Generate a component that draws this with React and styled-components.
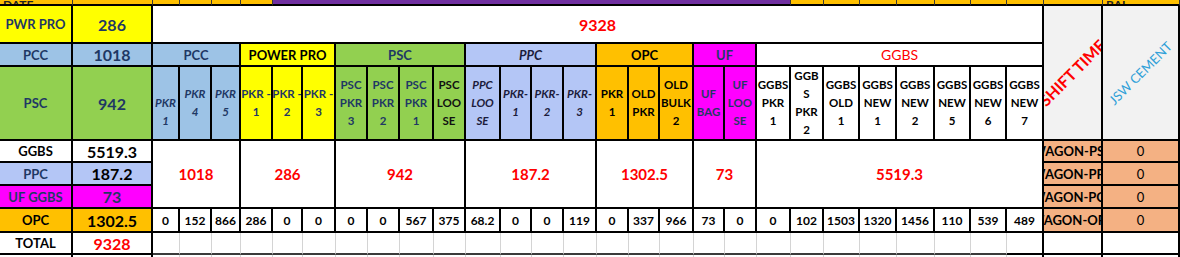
import React from "react";
import styled, { createGlobalStyle } from "styled-components";

const NAVY = "#1f3864";
const RED = "#ff0000";

const GlobalStyle = createGlobalStyle`
    html, body {
        margin: 0;
        padding: 0;
        background: #fff;
        overflow: hidden;
    }
    body {
        font-family: Lato, "Liberation Sans", sans-serif;
    }
`

const Sheet = styled.div`
    display: grid;
    width: 1180px;
    grid-template-columns: 73px 80px 27px 32px 29px 32px 30px 33px 32px 32px 34px 32px 35px 31px 32px 33px 32px 31px 34px 31px 32px 34px 33px 36px 37px 38px 36px 36px 37px 59px 77px;
    grid-template-rows: 6px 38px 23px 74px 22px 23px 23px 24px 22px 10px;
`

const Cell = styled.div`
    grid-column: span ${(p) => p.$span || 1};
    grid-row: span ${(p) => p.$rows || 1};
    box-sizing: border-box;
    background: ${(p) => p.$bg || "#fff"};
    color: ${(p) => p.$color || "#000"};
    font-size: ${(p) => p.$size || 13}px;
    font-weight: ${(p) => p.$weight || 700};
    font-style: ${(p) => (p.$italic ? "italic" : "normal")};
    border-right: 2px solid #000;
    border-bottom: 2px solid #000;
    display: flex;
    align-items: center;
    justify-content: center;
    text-align: center;
    overflow: hidden;
    white-space: nowrap;
`

const StripCell = styled.div`
    grid-column: span ${(p) => p.$span || 1};
    box-sizing: border-box;
    background: ${(p) => p.$bg || "#ffc000"};
    border-right: 1px solid #3a3a3a;
    border-bottom: 2px solid #000;
    display: flex;
    align-items: flex-end;
    justify-content: ${(p) => p.$align || "flex-start"};
    overflow: hidden;
    font-size: 12px;
    font-weight: 700;
    line-height: 12px;
    color: #222;
    padding-left: 3px;

    & > span {
        margin-bottom: -7px;
    }
`

const SubHeader = styled(Cell)`
    white-space: pre;
    font-size: 11.5px;
    line-height: 18px;
`

const BlankCell = styled.div`
    box-sizing: border-box;
    background: #fff;
    border-right: ${(p) => (p.$strong ? "2px solid #000" : "1px solid #d4d4d4")};
    border-bottom: 2px solid ${(p) => (p.$strong ? "#000" : "#3a3a3a")};
`

const RotatedText = styled.span`
    display: block;
    transform: rotate(-45deg);
    white-space: nowrap;
    color: ${(p) => p.$color};
    font-size: ${(p) => p.$size}px;
    font-weight: ${(p) => p.$weight};
`

const groups = [
    {
        name: "PCC", bg: "#9dc3e6", color: NAVY, total: "1018",
        subs: ["\nPKR\n1", "PKR\n4", "PKR\n5"], subColor: NAVY, subItalic: true,
        values: ["0", "152", "866"],
    },
    {
        name: "POWER PRO", bg: "#ffff00", color: "#000", total: "286",
        subs: ["PKR -\n1", "PKR -\n2", "PKR -\n3"], subColor: NAVY,
        values: ["286", "0", "0"],
    },
    {
        name: "PSC", bg: "#92d050", color: NAVY, total: "942",
        subs: ["PSC\nPKR\n3", "PSC\nPKR\n2", "PSC\nPKR\n1", "PSC\nLOO\nSE"], subColor: NAVY,
        values: ["0", "0", "567", "375"],
    },
    {
        name: "PPC", bg: "#b4c6f6", color: "#1c1c3c", italic: true, total: "187.2",
        subs: ["PPC\nLOO\nSE", "PKR-\n1", "PKR-\n2", "PKR-\n3"], subColor: "#1c1c3c", subItalic: true,
        values: ["68.2", "0", "0", "119"],
    },
    {
        name: "OPC", bg: "#ffc000", color: "#000", total: "1302.5",
        subs: ["PKR\n1", "OLD\nPKR", "OLD\nBULK\n2"], subColor: "#000",
        values: ["0", "337", "966"],
    },
    {
        name: "UF", bg: "#ff00ff", color: NAVY, total: "73",
        subs: ["UF\nBAG", "UF\nLOO\nSE"], subColor: NAVY,
        values: ["73", "0"],
    },
    {
        name: "GGBS", bg: "#fff", color: RED, weight: 400, size: 14, total: "5519.3",
        subs: ["GGBS\nPKR\n1", "GGB\nS\nPKR\n2", "GGBS\nOLD\n1", "GGBS\nNEW\n1", "GGBS\nNEW\n2", "GGBS\nNEW\n5", "GGBS\nNEW\n6", "GGBS\nNEW\n7"],
        subColor: "#000",
        values: ["0", "102", "1503", "1320", "1456", "110", "539", "489"],
    },
]

const dataCols = groups.reduce((n, g) => n + g.subs.length, 0)

const App = () => {
    return (
        <>
            <GlobalStyle />
            <Sheet>
                {/* top strip, cut off by the window */}
                <StripCell><span>DATE</span></StripCell>
                <StripCell />
                <StripCell />
                <StripCell />
                <StripCell />
                <StripCell />
                <StripCell $span={16} $bg="#7030a0" />
                {Array.from({ length: 8 }).map((_, i) => (
                    <StripCell key={"s" + i} />
                ))}
                <StripCell $align="center"><span>PRIMARY BAL</span></StripCell>

                {/* PWR PRO row */}
                <Cell $bg="#ffff00" $color={NAVY}>PWR PRO</Cell>
                <Cell $bg="#ffff00" $color={NAVY} $size={16}>286</Cell>
                <Cell $span={dataCols} $color={RED} $size={16}>9328</Cell>
                <Cell $rows={3} $bg="#f2f2f2">
                    <RotatedText $color={RED} $size={16} $weight={700}>SHIFT TIME</RotatedText>
                </Cell>
                <Cell $rows={3} $bg="#f2f2f2">
                    <RotatedText $color="#2fa0d8" $size={13} $weight={400}>JSW CEMENT</RotatedText>
                </Cell>

                {/* PCC row: group headers */}
                <Cell $bg="#9dc3e6" $color={NAVY}>PCC</Cell>
                <Cell $bg="#9dc3e6" $color={NAVY} $size={16}>1018</Cell>
                {groups.map((g) => (
                    <Cell
                        key={g.name}
                        $span={g.subs.length}
                        $bg={g.bg}
                        $color={g.color}
                        $italic={g.italic}
                        $weight={g.weight}
                        $size={g.size}
                    >
                        {g.name}
                    </Cell>
                ))}

                {/* PSC row: sub headers */}
                <Cell $bg="#92d050" $color={NAVY}>PSC</Cell>
                <Cell $bg="#92d050" $color={NAVY} $size={16}>942</Cell>
                {groups.map((g) =>
                    g.subs.map((s, i) => (
                        <SubHeader
                            key={g.name + i}
                            $bg={g.bg}
                            $color={s.includes("LOO") && g.name === "PSC" ? "#111" : g.subColor}
                            $italic={g.subItalic}
                        >
                            {s}
                        </SubHeader>
                    ))
                )}

                {/* GGBS row with merged totals */}
                <Cell>GGBS</Cell>
                <Cell $size={16}>5519.3</Cell>
                {groups.map((g) => (
                    <Cell key={"t" + g.name} $span={g.subs.length} $rows={3} $color={RED} $size={15}>
                        {g.total}
                    </Cell>
                ))}
                <Cell $bg="#f4b183">WAGON-PSC</Cell>
                <Cell $bg="#f4b183" $weight={400}>0</Cell>

                <Cell $bg="#b4c6f6" $color={NAVY}>PPC</Cell>
                <Cell $bg="#b4c6f6" $size={16}>187.2</Cell>
                <Cell $bg="#f4b183">WAGON-PPC</Cell>
                <Cell $bg="#f4b183" $weight={400}>0</Cell>

                <Cell $bg="#ff00ff" $color={NAVY}>UF GGBS</Cell>
                <Cell $bg="#ff00ff" $color={NAVY} $size={16}>73</Cell>
                <Cell $bg="#f4b183">WAGON-PCC</Cell>
                <Cell $bg="#f4b183" $weight={400}>0</Cell>

                {/* OPC row with per packer values */}
                <Cell $bg="#ffc000">OPC</Cell>
                <Cell $bg="#ffc000" $size={16}>1302.5</Cell>
                {groups.map((g) =>
                    g.values.map((v, i) => (
                        <Cell key={"v" + g.name + i} $size={12}>{v}</Cell>
                    ))
                )}
                <Cell $bg="#f4b183">WAGON-OPC</Cell>
                <Cell $bg="#f4b183" $weight={400}>0</Cell>

                {/* TOTAL row */}
                <Cell>TOTAL</Cell>
                <Cell $color={RED} $size={16}>9328</Cell>
                {Array.from({ length: dataCols }).map((_, i) => (
                    <BlankCell key={"b" + i} $strong={i === dataCols - 1} />
                ))}
                <BlankCell $strong />
                <BlankCell $strong />

                {/* next row, cut by the window */}
                <BlankCell $strong />
                <BlankCell $strong />
                {Array.from({ length: dataCols + 2 }).map((_, i) => (
                    <BlankCell key={"n" + i} $strong={i >= dataCols - 1} />
                ))}
            </Sheet>
        </>
    )
}

export default App
